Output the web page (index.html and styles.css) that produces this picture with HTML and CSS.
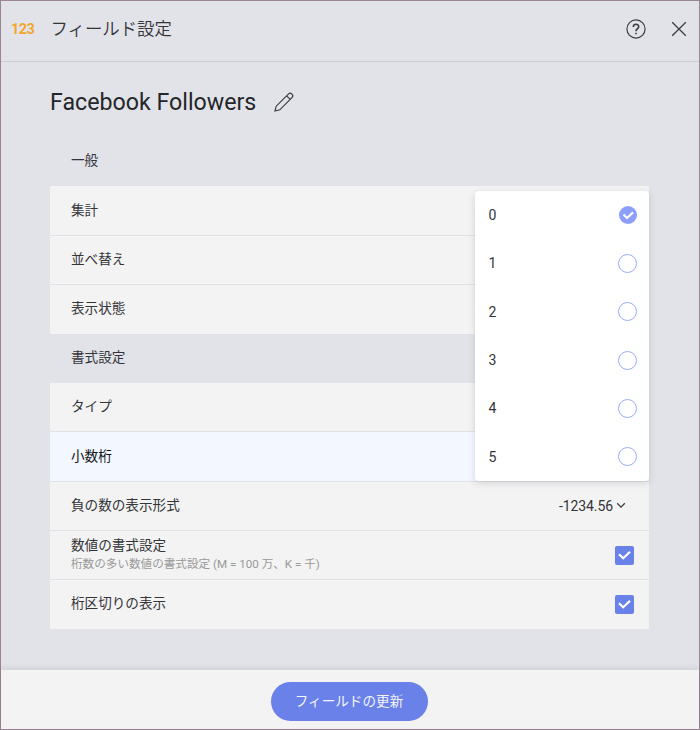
FILE: index.html
```html
<!DOCTYPE html>
<html lang="ja">
<head>
<meta charset="utf-8">
<title>フィールド設定</title>
<link rel="stylesheet" href="styles.css">
</head>
<body>
<div class="dialog">
  <header class="header">
    <span class="type">123</span>
    <h1 class="title">フィールド設定</h1>
    <svg class="help" width="20" height="20" viewBox="0 0 20 20"><circle cx="10" cy="10" r="9.1"/><path class="q" d="M7.3 7.9C7.3 4.5 12.7 4.5 12.7 7.7C12.7 9.7 10 9.7 10 12.2"/><path class="q" d="M10 13.8V15.2"/></svg>
    <svg class="close" width="16" height="16" viewBox="0 0 16 16"><path d="M1.2 1.2L14.8 14.8M14.8 1.2L1.2 14.8"/></svg>
  </header>
  <main class="content">
    <div class="name-row">
      <h2 class="name">Facebook Followers</h2>
      <svg class="pencil" width="22" height="22" viewBox="0 0 22 22"><path d="M2 20L3.2 15.2L15.6 2.8Q17.1 1.3 18.9 3.1Q20.7 4.9 19.2 6.4L6.8 18.8ZM13.6 4.8L17.2 8.4"/></svg>
    </div>
    <div class="settings">
      <div class="section">一般</div>
      <div class="row"><span class="label">集計</span></div>
      <div class="row"><span class="label">並べ替え</span></div>
      <div class="row last"><span class="label">表示状態</span></div>
      <div class="section">書式設定</div>
      <div class="row"><span class="label">タイプ</span></div>
      <div class="row active"><span class="label">小数桁</span></div>
      <div class="row"><span class="label">負の数の表示形式</span><span class="value">-1234.56<svg width="10" height="7" viewBox="0 0 10 7"><path d="M1.2 1.3L5 5.1L8.8 1.3"/></svg></span></div>
      <div class="row"><div class="label">数値の書式設定<small class="hint">桁数の多い数値の書式設定 (M = 100 万、K = 千)</small></div><span class="check"><svg width="19" height="19" viewBox="0 0 19 19"><path d="M4 8.2L8.2 12.2L15 5.8"/></svg></span></div>
      <div class="row last"><span class="label">桁区切りの表示</span><span class="check"><svg width="19" height="19" viewBox="0 0 19 19"><path d="M4 8.2L8.2 12.2L15 5.8"/></svg></span></div>
      <div class="menu">
        <div class="option"><span>0</span><span class="radio selected"><svg width="18" height="18" viewBox="0 0 18 18"><path d="M4.5 8.5L8 12L14 6.4"/></svg></span></div>
        <div class="option"><span>1</span><span class="radio"></span></div>
        <div class="option"><span>2</span><span class="radio"></span></div>
        <div class="option"><span>3</span><span class="radio"></span></div>
        <div class="option"><span>4</span><span class="radio"></span></div>
        <div class="option"><span>5</span><span class="radio"></span></div>
      </div>
    </div>
  </main>
  <footer class="footer"><button class="update">フィールドの更新</button></footer>
</div>
</body>
</html>
```
FILE: styles.css
```css
* { box-sizing: border-box; }
body { margin: 0; font-family: Roboto, "Noto Sans CJK JP", sans-serif; color: #333539; }
svg { display: block; fill: none; stroke: #3b3d40; stroke-width: 1.3; flex: none; }
.dialog {
  width: 700px;
  height: 730px;
  display: flex;
  flex-direction: column;
  background: #e2e3e9;
  border: 1px solid #9b8592;
}
.header {
  height: 61px;
  flex: none;
  display: flex;
  align-items: center;
  padding: 0 12px 5px 10px;
  border-bottom: 1px solid #cdced4;
}
.type { width: 39.5px; padding-top: 2px; font-size: 14.5px; font-weight: 700; color: #f2a62f; letter-spacing: -0.6px; }
.title { margin: 0; flex: 1; font-size: 17.4px; font-weight: 350; line-height: 24px; }
.help { margin-right: 25px; stroke-width: 1.2; }
.help .q { stroke-width: 1.6; }
.content { flex: 1; padding: 20px 50px 0 49px; }
.name-row { height: 42px; padding-bottom: 2px; display: flex; align-items: center; gap: 17px; }
.name { margin: 0; width: 206px; font-size: 23.2px; font-weight: 400; line-height: 30px; white-space: nowrap; color: #252629; }
.pencil { stroke-width: 1.2; }
.settings { position: relative; padding-top: 9px; }
.section { height: 49.2px; padding: 0 21px; line-height: 47px; font-size: 13.6px; }
.section:first-child { height: 53.4px; line-height: 54px; }
.row {
  height: 49.2px;
  display: flex;
  align-items: center;
  justify-content: space-between;
  padding: 0 15px 1px 21px;
  background: #f3f3f3;
  border-bottom: 1px solid #e1e2e8;
  font-size: 13.6px;
}
.row.last { border-bottom-color: #f3f3f3; }
.row.active { background: #f3f7ff; color: #101114; }
.label { line-height: 20px; margin-top: -0.6px; }
.hint { display: block; font-size: 11.6px; line-height: 18px; color: #999; }
.value { display: flex; align-items: center; gap: 3px; padding-right: 8px; padding-top: 1px; font-size: 14px; letter-spacing: -0.1px; }
.check { width: 19px; height: 19px; margin-top: 1.5px; border-radius: 2px; background: #6981e8; }
.check svg, .radio svg { stroke: #fff; stroke-width: 2.2; }
.menu {
  position: absolute;
  top: 67px;
  right: 0;
  width: 174px;
  height: 290px;
  display: flex;
  flex-direction: column;
  background: #fff;
  border-radius: 4px;
  box-shadow: 0 2px 7px rgba(40, 42, 55, 0.16);
}
.option { flex: 1; display: flex; align-items: center; justify-content: space-between; padding: 0 12px 0 13.5px; font-size: 14px; }
.radio { width: 19px; height: 19px; border: 1px solid #9cacf8; border-radius: 50%; }
.radio.selected { width: 18px; height: 18px; background: #8b9ef9; border: 0; }
.footer {
  height: 59px;
  flex: none;
  display: flex;
  justify-content: center;
  padding: 12px 2px 0 0;
  background: #f3f3f3;
  box-shadow: 0 0 7px rgba(40, 42, 55, 0.16);
}
.update {
  width: 157px;
  height: 39px;
  padding: 0 0 3px;
  border: 0;
  border-radius: 20px;
  background: #6981e8;
  color: #f4f5fc;
  font: 13.6px Roboto, "Noto Sans CJK JP", sans-serif;
}
```
